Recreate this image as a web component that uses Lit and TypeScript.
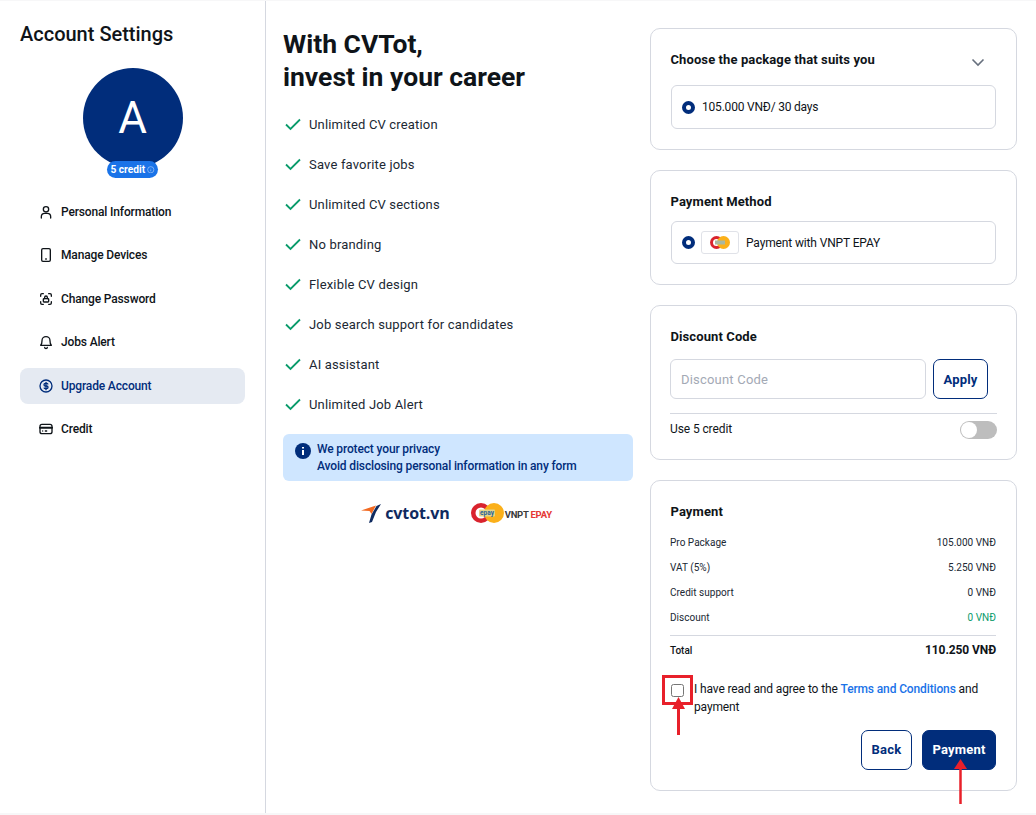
import { LitElement, html, css, svg } from 'lit';
import { customElement } from 'lit/decorators.js';

const MENU = [
  { label: 'Personal Information', icon: svg`<circle cx="12" cy="8" r="4"/><path d="M5 21v-2a5 5 0 0 1 5-5h4a5 5 0 0 1 5 5v2"/>` },
  { label: 'Manage Devices', icon: svg`<rect x="5.500" y="2.500" width="13" height="19" rx="2"/><path d="M11.500 18h1"/>` },
  { label: 'Change Password', icon: svg`<path d="M4 8V6a2 2 0 0 1 2-2h2M16 4h2a2 2 0 0 1 2 2v2M20 16v2a2 2 0 0 1-2 2h-2M8 20H6a2 2 0 0 1-2-2v-2"/><rect x="8" y="11.500" width="8" height="5" rx="1"/><path d="M10 11.500v-2a2 2 0 0 1 4 0v2"/>` },
  { label: 'Jobs Alert', icon: svg`<path d="M6 10a6 6 0 0 1 12 0c0 4 1 6 2 7H4c1-1 2-3 2-7Z"/><path d="M10 20a2 2 0 0 0 4 0"/>` },
  { label: 'Upgrade Account', active: true, icon: svg`<circle cx="12" cy="12" r="9"/><path d="M14.800 9a2 2 0 0 0-1.800-1h-2a2 2 0 0 0 0 4h2a2 2 0 0 1 0 4h-2a2 2 0 0 1-1.800-1M12 6.500v11"/>` },
  { label: 'Credit', icon: svg`<rect x="3" y="5" width="18" height="14" rx="3"/><path d="M3 10h18" stroke-width="3"/><path d="M7 15h.01M11 15h2"/>` },
];

const BENEFITS = [
  'Unlimited CV creation',
  'Save favorite jobs',
  'Unlimited CV sections',
  'No branding',
  'Flexible CV design',
  'Job search support for candidates',
  'AI assistant',
  'Unlimited Job Alert',
];

const SUMMARY = [
  { label: 'Pro Package', value: '105.000 VNĐ' },
  { label: 'VAT (5%)', value: '5.250 VNĐ' },
  { label: 'Credit support', value: '0 VNĐ' },
  { label: 'Discount', value: '0 VNĐ', green: true },
];

@customElement('app-root')
export class AppRoot extends LitElement {
  static styles = css`
    :host {
      display: block;
      position: relative;
      width: 1036px;
      height: 815px;
      overflow: hidden;
      background: #f7f7f8;
      font-family: Roboto, "Liberation Sans", sans-serif;
      color: #0f1419;
    }
    .page {
      display: flex;
      height: 812px;
      margin-top: 1px;
      background: #fff;
    }
    .side {
      width: 266px;
      box-sizing: border-box;
      flex: none;
      padding: 20px 20px 0;
      border-right: 1px solid #d5d8e0;
    }
    .side h2 {
      margin: 0;
      font-size: 20px;
      line-height: 26px;
      font-weight: 500;
    }
    .avatar-wrap {
      display: flex;
      flex-direction: column;
      align-items: center;
      margin-top: 21px;
    }
    .avatar {
      width: 100px;
      height: 100px;
      border-radius: 50%;
      background: #012d7b;
      color: #fff;
      font-size: 44px;
      display: flex;
      align-items: center;
      justify-content: center;
    }
    .badge {
      display: flex;
      align-items: center;
      gap: 2px;
      height: 17px;
      margin-top: -7px;
      padding: 0 3.500px;
      border-radius: 9px;
      background: #1a73e8;
      color: #fff;
      font-size: 10.200px;
      font-weight: 700;
      position: relative;
    }
    .badge svg { width: 7.500px; height: 7.500px; fill: none; stroke: #b9d4f8; stroke-width: 2; }
    .menu { margin-top: 16px; }
    .item {
      display: flex;
      align-items: center;
      gap: 7px;
      height: 36px;
      margin-bottom: 7.400px;
      padding-left: 18px;
      border-radius: 8px;
      font-size: 12px;
      font-weight: 500;
      letter-spacing: -0.15px;
    }
    .item.active { background: #e5eaf2; color: #012d7b; }
    .item svg {
      width: 16px;
      height: 16px;
      flex: none;
      fill: none;
      stroke: currentColor;
      stroke-width: 2;
      stroke-linecap: round;
      stroke-linejoin: round;
    }
    .main {
      width: 350px;
      flex: none;
      margin-left: 17px;
      padding-top: 26px;
    }
    .main h1 {
      margin: 0;
      font-size: 26.500px;
      line-height: 33px;
      font-weight: 700;
    }
    .benefits {
      list-style: none;
      margin: 11px 0 0;
      padding: 0;
    }
    .benefits li {
      display: flex;
      align-items: center;
      gap: 8px;
      height: 40px;
      padding-left: 2px;
      font-size: 13px;
      letter-spacing: 0.17px;
      color: #202833;
    }
    .benefits svg {
      width: 16px;
      height: 16px;
      fill: none;
      stroke: #0a9b6b;
      stroke-width: 1.800;
      flex: none;
    }
    .notice {
      display: flex;
      gap: 6px;
      margin-top: 10px;
      padding: 7px 12px;
      height: 47px;
      box-sizing: border-box;
      border-radius: 6px;
      background: #cfe6ff;
      color: #012d7b;
      font-size: 12px;
      font-weight: 500;
      line-height: 17px;
      letter-spacing: -0.14px;
    }
    .notice svg { width: 16px; height: 16px; flex: none; margin-top: 2px; }
    .logos {
      display: flex;
      justify-content: center;
      align-items: center;
      gap: 21px;
      margin-top: 21px;
      padding-right: 3px;
    }
    .cv-logo { display: flex; align-items: center; gap: 4px; }
    .cv-logo svg { width: 20px; height: 19px; }
    .cv-logo span {
      font-family: "Open Sans", sans-serif;
      font-size: 16px;
      font-weight: 700;
      color: #0f2a5f;
      letter-spacing: -0.1px;
    }
    .epay-logo { display: flex; align-items: center; gap: 1px; }
    .epay-logo svg { width: 33px; height: 20px; }
    .epay-logo span { font-size: 9.500px; font-weight: 700; color: #3a3a3a; letter-spacing: -0.25px; margin-top: 3px; }
    .epay-logo b { color: #e53935; font-weight: 700; }
    .cards {
      width: 367px;
      flex: none;
      margin-left: 17px;
      padding-top: 27px;
      display: flex;
      flex-direction: column;
      gap: 20px;
    }
    .card {
      box-sizing: border-box;
      border: 1px solid #d5d8e0;
      border-radius: 10px;
      padding: 21px 20px 20px 19px;
    }
    .card h3 {
      margin: 0;
      padding-left: 0.500px;
      font-size: 13px;
      line-height: 20px;
      font-weight: 700;
      letter-spacing: 0.1px;
    }
    .head { display: flex; justify-content: space-between; }
    .head svg { width: 16px; height: 16px; margin: 3.500px 10px 0 0; fill: none; stroke: #67707e; stroke-width: 1.600; }
    .option {
      display: flex;
      align-items: center;
      gap: 7px;
      margin-left: 1px;
      padding: 0 10px;
      width: 325px;
      box-sizing: border-box;
      border: 1px solid #d5d8e0;
      border-radius: 6px;
      font-size: 12px;
      letter-spacing: -0.14px;
    }
    .radio {
      width: 13px;
      height: 13px;
      box-sizing: border-box;
      border: 4px solid #012d7b;
      border-radius: 50%;
      flex: none;
    }
    .option.pkg { height: 44px; margin-top: 15px; letter-spacing: -0.2px; }
    .option.pay { height: 43px; margin-top: 9px; gap: 6px; }
    .pay-logo {
      display: flex;
      align-items: center;
      justify-content: center;
      width: 38px;
      height: 23px;
      box-sizing: border-box;
      margin-right: 1px;
      border: 1px solid #e0e2e8;
      border-radius: 3px;
    }
    .pay-logo svg { width: 20px; height: 13px; }
    .discount-row { display: flex; gap: 7px; margin-top: 12px; }
    .discount-row input {
      width: 256px;
      height: 40px;
      box-sizing: border-box;
      padding: 0 10px;
      border: 1px solid #d5d8e0;
      border-radius: 6px;
      font: 13px Roboto, sans-serif;
      letter-spacing: 0.2px;
      outline: none;
    }
    .discount-row input::placeholder { color: #a3a9b5; }
    .btn {
      box-sizing: border-box;
      height: 40px;
      border: 1px solid #012d7b;
      border-radius: 7px;
      background: #fff;
      color: #012d7b;
      font: 700 13px Roboto, sans-serif;
      letter-spacing: 0.2px;
      padding: 0;
    }
    .btn.apply { width: 55px; }
    .btn.back { width: 51px; padding-bottom: 1px; }
    .btn.primary { width: 74px; padding-bottom: 1px; background: #012d7b; color: #fff; }
    .credit {
      display: flex;
      justify-content: space-between;
      align-items: flex-start;
      margin-top: 14px;
      padding-top: 7px;
      width: 327px;
      border-top: 1px solid #d5d8e0;
      font-size: 12px;
      line-height: 16px;
      letter-spacing: -0.1px;
    }
    .toggle {
      width: 37px;
      height: 18px;
      border-radius: 9px;
      background: #bdbdbd;
      position: relative;
    }
    .toggle::after {
      content: "";
      position: absolute;
      left: 1px;
      top: 1px;
      width: 16px;
      height: 16px;
      border-radius: 50%;
      background: #fff;
    }
    .summary { margin-top: 8px; }
    .row {
      display: flex;
      justify-content: space-between;
      align-items: center;
      height: 25px;
      font-size: 10px;
      letter-spacing: 0.02px;
      color: #202833;
    }
    .row .green { color: #0a9b6b; }
    .total {
      display: flex;
      justify-content: space-between;
      align-items: center;
      height: 28px;
      margin-top: 5px;
      border-top: 1px solid #d5d8e0;
      font-size: 10px;
      font-weight: 500;
    }
    .total strong { font-size: 12px; font-weight: 700; letter-spacing: -0.1px; }
    .agree {
      display: flex;
      margin-top: 16px;
      font-size: 12px;
      line-height: 18px;
      letter-spacing: -0.13px;
    }
    .agree input {
      width: 13px;
      height: 13px;
      margin: 4px 10px 0 1px;
      flex: none;
    }
    .agree a { color: #1a73e8; font-weight: 500; text-decoration: none; }
    .actions {
      display: flex;
      justify-content: flex-end;
      gap: 10px;
      margin-top: 14px;
    }
    .mark {
      position: absolute;
      pointer-events: none;
    }
    .mark.box {
      left: 662px;
      top: 675px;
      width: 31px;
      height: 30px;
      box-sizing: border-box;
      border: 3px solid #e8202a;
    }
    .mark.arrow { width: 14px; fill: #e8202a; stroke: #e8202a; }
    .mark.one { left: 672px; top: 697px; height: 38px; }
    .mark.two { left: 954px; top: 759px; height: 45px; }
  `;

  render() {
    return html`
      <div class="page">
        <aside class="side">
          <h2>Account Settings</h2>
          <div class="avatar-wrap">
            <div class="avatar">A</div>
            <div class="badge">5 credit
              <svg viewBox="0 0 24 24"><circle cx="12" cy="12" r="10"/><path d="M12 11v6M12 7v1"/></svg>
            </div>
          </div>
          <nav class="menu">
            ${MENU.map((m) => html`
              <div class=${m.active ? 'item active' : 'item'}>
                <svg viewBox="0 0 24 24">${m.icon}</svg>
                ${m.label}
              </div>
            `)}
          </nav>
        </aside>

        <section class="main">
          <h1>With CVTot,<br />invest in your career</h1>
          <ul class="benefits">
            ${BENEFITS.map((b) => html`
              <li>
                <svg viewBox="0 0 16 16"><path d="M1 8.500l4.500 4.500L15 3.500"/></svg>
                ${b}
              </li>
            `)}
          </ul>
          <div class="notice">
            <svg viewBox="0 0 16 16">
              <circle cx="8" cy="8" r="8" fill="#012d7b"/>
              <path d="M8 7v5M8 4v1.500" stroke="#fff" stroke-width="2"/>
            </svg>
            <div>We protect your privacy<br />Avoid disclosing personal information in any form</div>
          </div>
          <div class="logos">
            <div class="cv-logo">
              <svg viewBox="0 0 20 19">
                <path d="M0 6.500 L15 1.500 L10.500 10 L8.500 7 Z" fill="#f26a21"/>
                <path d="M20 0 L15.500 2 L10.500 10.500 L8 19 L11 18 L15 8 Z" fill="#0f2a5f"/>
              </svg>
              <span>cvtot.vn</span>
            </div>
            <div class="epay-logo">
              <svg viewBox="0 0 33 20">
                <circle cx="10" cy="10" r="10" fill="#d9232e"/>
                <circle cx="10" cy="10" r="5.500" fill="#fff"/>
                <circle cx="23" cy="10" r="10" fill="#fbb01a"/>
                <rect x="8" y="6.500" width="16" height="7" rx="1" fill="#e3d48a"/>
                <text x="16" y="12.300" text-anchor="middle" font-size="6.500" font-weight="700" fill="#27639b" font-family="Roboto">epay</text>
              </svg>
              <span>VNPT <b>EPAY</b></span>
            </div>
          </div>
        </section>

        <section class="cards">
          <div class="card">
            <div class="head">
              <h3>Choose the package that suits you</h3>
              <svg viewBox="0 0 16 16"><path d="M2.500 5.500L8 11l5.500-5.500"/></svg>
            </div>
            <div class="option pkg"><span class="radio"></span>105.000 VNĐ/ 30 days</div>
          </div>
          <div class="card">
            <h3>Payment Method</h3>
            <div class="option pay">
              <span class="radio"></span>
              <span class="pay-logo">
                <svg viewBox="0 0 20 13">
                  <circle cx="6.500" cy="6.500" r="6.500" fill="#d9232e"/>
                  <circle cx="6.500" cy="6.500" r="3.500" fill="#fff"/>
                  <circle cx="13.500" cy="6.500" r="6.500" fill="#fbb01a"/>
                  <rect x="5" y="4.500" width="10" height="4" fill="#a9b8a0"/>
                </svg>
              </span>
              Payment with VNPT EPAY
            </div>
          </div>
          <div class="card">
            <h3>Discount Code</h3>
            <div class="discount-row">
              <input placeholder="Discount Code" />
              <button class="btn apply">Apply</button>
            </div>
            <div class="credit">
              <span>Use 5 credit</span>
              <span class="toggle"></span>
            </div>
          </div>
          <div class="card">
            <h3>Payment</h3>
            <div class="summary">
              ${SUMMARY.map((s) => html`
                <div class="row"><span>${s.label}</span><span class=${s.green ? 'green' : ''}>${s.value}</span></div>
              `)}
            </div>
            <div class="total"><span>Total</span><strong>110.250 VNĐ</strong></div>
            <label class="agree">
              <input type="checkbox" />
              <span>I have read and agree to the <a>Terms and Conditions</a> and payment</span>
            </label>
            <div class="actions">
              <button class="btn back">Back</button>
              <button class="btn primary">Payment</button>
            </div>
          </div>
        </section>
      </div>
      <div class="mark box"></div>
      <svg class="mark arrow one" viewBox="0 0 14 38"><path d="M6.500 38V10" stroke-width="3" fill="none"/><path d="M6.500 0L13 12H0Z" stroke="none"/></svg>
      <svg class="mark arrow two" viewBox="0 0 14 45"><path d="M6.500 45V9" stroke-width="2.500" fill="none"/><path d="M6.500 0L13 10H0Z" stroke="none"/></svg>
    `;
  }
}
